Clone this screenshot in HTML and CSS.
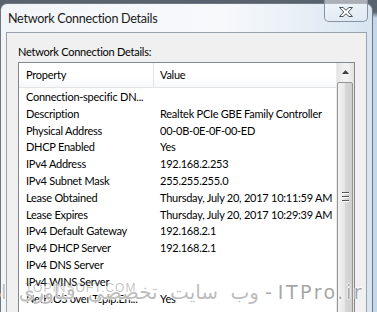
FILE: index.html
```html
<!DOCTYPE html>
<html lang="en">
<head>
    <meta charset="UTF-8">
    <title>Network Connection Details</title>
    <link rel="stylesheet" href="styles.css">
</head>
<body>
    <div class="window">
        <!-- Title bar -->
        <div class="titlebar">
            <span class="title">Network Connection Details</span>
            <div class="close-btn">
                <svg width="16" height="12" viewBox="0 0 16 12">
                    <path d="M1.5 1.5 H5 L8 4.2 L11 1.5 H14.5 L10.2 6 L14.5 10.5 H11 L8 7.8 L5 10.5 H1.5 L5.8 6 Z" fill="#fff" stroke="#4a525c" stroke-width="1"/>
                </svg>
            </div>
        </div>

        <!-- Client area -->
        <div class="client">
            <div class="caption">Network Connection Details:</div>
            <div class="listview">
                <div class="list-main">
                    <div class="list-header">
                        <div class="col-head first">Property</div>
                        <div class="col-head">Value</div>
                    </div>
                    <div class="list-body">
                        <div class="row"><span>Connection-specific DN...</span><span></span></div>
                        <div class="row"><span>Description</span><span>Realtek PCIe GBE Family Controller</span></div>
                        <div class="row"><span>Physical Address</span><span>00-0B-0E-0F-00-ED</span></div>
                        <div class="row"><span>DHCP Enabled</span><span>Yes</span></div>
                        <div class="row"><span>IPv4 Address</span><span>192.168.2.253</span></div>
                        <div class="row"><span>IPv4 Subnet Mask</span><span>255.255.255.0</span></div>
                        <div class="row"><span>Lease Obtained</span><span>Thursday, July 20, 2017 10:11:59 AM</span></div>
                        <div class="row"><span>Lease Expires</span><span>Thursday, July 20, 2017 10:29:39 AM</span></div>
                        <div class="row"><span>IPv4 Default Gateway</span><span>192.168.2.1</span></div>
                        <div class="row"><span>IPv4 DHCP Server</span><span>192.168.2.1</span></div>
                        <div class="row"><span>IPv4 DNS Server</span><span></span></div>
                        <div class="row"><span>IPv4 WINS Server</span><span></span></div>
                        <div class="row"><span>NetBIOS over Tcpip.En...</span><span>Yes</span></div>
                    </div>
                </div>
                <!-- Vertical scrollbar -->
                <div class="scrollbar">
                    <div class="arrow-up">
                        <svg width="7" height="4" viewBox="0 0 7 4"><path d="M0 4 L3.5 0 L7 4 Z" fill="#404040"/></svg>
                    </div>
                    <div class="thumb">
                        <div class="grip"><i></i><i></i><i></i></div>
                    </div>
                </div>
            </div>
        </div>
    </div>

    <!-- Watermarks over the screenshot -->
    <div class="mark-small">TOPINSOFT.COM</div>
    <div class="mark" dir="rtl"><span class="mark-latin">ITPro.ir</span> - <span class="mark-fa">وب سایت تخصصی فناوری اطلاعات</span></div>
</body>
</html>
```

FILE: styles.css
```css
/* Page behind the dialog */
body {
    margin: 0;
    width: 377px;
    height: 312px;
    overflow: hidden;
    position: relative;
    font-family: Lato, "Liberation Sans", sans-serif;
    font-size: 11px;
    letter-spacing: -0.25px;
    color: #000;
    background: linear-gradient(to bottom, #58636e 0, #58636e 12px, #c4d8ea 18px, #c4d8ea 100%);
}

/* Glass window frame */
.window {
    margin-top: 3px;
    width: 373px;
    height: 320px;
    box-sizing: border-box;
    border: 1px solid #6d7884;
    border-bottom: none;
    border-radius: 7px 7px 0 0;
    padding: 0 5px;
    background: linear-gradient(to right, #f2f5f8 0, #f7f9fb 60%, #e4edf5 85%, #d7e5f1 100%);
}

.titlebar {
    height: 28px;
    display: flex;
    justify-content: space-between;
    align-items: flex-start;
}

.title {
    font-size: 12.6px;
    letter-spacing: -0.3px;
    margin: 7px 0 0 2px;
    color: #1a1a1a;
    text-shadow: 0 0 6px #fff;
}

.close-btn {
    width: 44px;
    height: 22px;
    margin-right: -1px;
    margin-top: -4px;
    border: 1px solid #8793a0;
    border-top: none;
    border-radius: 0 0 5px 5px;
    background: linear-gradient(to bottom, rgba(255,255,255,0.5), rgba(230,238,246,0.4));
    display: flex;
    align-items: center;
    justify-content: center;
    padding-top: 2px;
    box-sizing: border-box;
}

/* Dialog client area */
.client {
    height: 300px;
    background: #f0f0f0;
    border: 1px solid #9aa3ad;
    border-bottom: none;
    padding: 0 11px;
}

.caption {
    height: 29px;
    line-height: 37px;
}

/* List view */
.listview {
    display: flex;
    height: 260px;
    border: 1px solid #828790;
    background: #fff;
}

.list-main {
    flex: 1;
    overflow: hidden;
}

.list-header {
    display: flex;
    height: 24px;
    border-bottom: 1px solid #e5e5e5;
    background: linear-gradient(to bottom, #fff 0, #fff 60%, #f7f8fa 100%);
}

.col-head {
    line-height: 23px;
    padding-left: 6px;
    white-space: nowrap;
}

.col-head.first {
    width: 127px;
    padding-left: 7px;
    border-right: 1px solid #e0e3e8;
}

.list-body {
    padding-top: 1px;
}

.row {
    display: flex;
    height: 16.8px;
    line-height: 16.8px;
    white-space: nowrap;
}

.row span:first-child {
    width: 134px;
    padding-left: 7px;
    flex: none;
    box-sizing: border-box;
}

.row span:last-child {
    padding-left: 7px;
}

/* Scrollbar */
.scrollbar {
    width: 17px;
    flex: none;
    background: linear-gradient(to right, #e3e3e3, #f2f2f2 40%, #f2f2f2 60%, #e3e3e3);
    border-left: 1px solid #ececec;
}

.arrow-up {
    height: 18px;
    display: flex;
    align-items: center;
    justify-content: center;
}

.thumb {
    height: 260px;
    margin: 1px 1px 0 0;
    border: 1px solid #959595;
    border-radius: 2px;
    background: linear-gradient(to right, #f3f3f3, #e8e8e8 45%, #d6d6d6 55%, #cfcfcf);
    display: flex;
    justify-content: center;
    padding-top: 109px;
    box-sizing: border-box;
}

.grip {
    display: flex;
    flex-direction: column;
    gap: 2px;
}

.grip i {
    display: block;
    width: 7px;
    height: 1px;
    background: #555;
    border-bottom: 1px solid #fff;
}

/* Watermarks */
.mark {
    position: absolute;
    right: 13px;
    top: 280px;
    font-family: "DejaVu Sans", sans-serif;
    font-size: 19px;
    letter-spacing: 0;
    white-space: nowrap;
    color: rgba(150, 150, 150, 0.85);
    text-shadow: 1px 0 rgba(255,255,255,0.7), -1px 0 rgba(255,255,255,0.7), 0 1px rgba(255,255,255,0.7), 0 -1px rgba(255,255,255,0.7);
}

.mark-latin {
    letter-spacing: 2.5px;
}

.mark-fa {
    font-size: 20px;
    word-spacing: 6px;
    color: rgba(160, 160, 160, 0.7);
}

.mark-small {
    position: absolute;
    left: 25px;
    top: 281px;
    font-family: "Liberation Sans", sans-serif;
    font-size: 12px;
    letter-spacing: 1px;
    color: rgba(120, 120, 120, 0.45);
}
```
